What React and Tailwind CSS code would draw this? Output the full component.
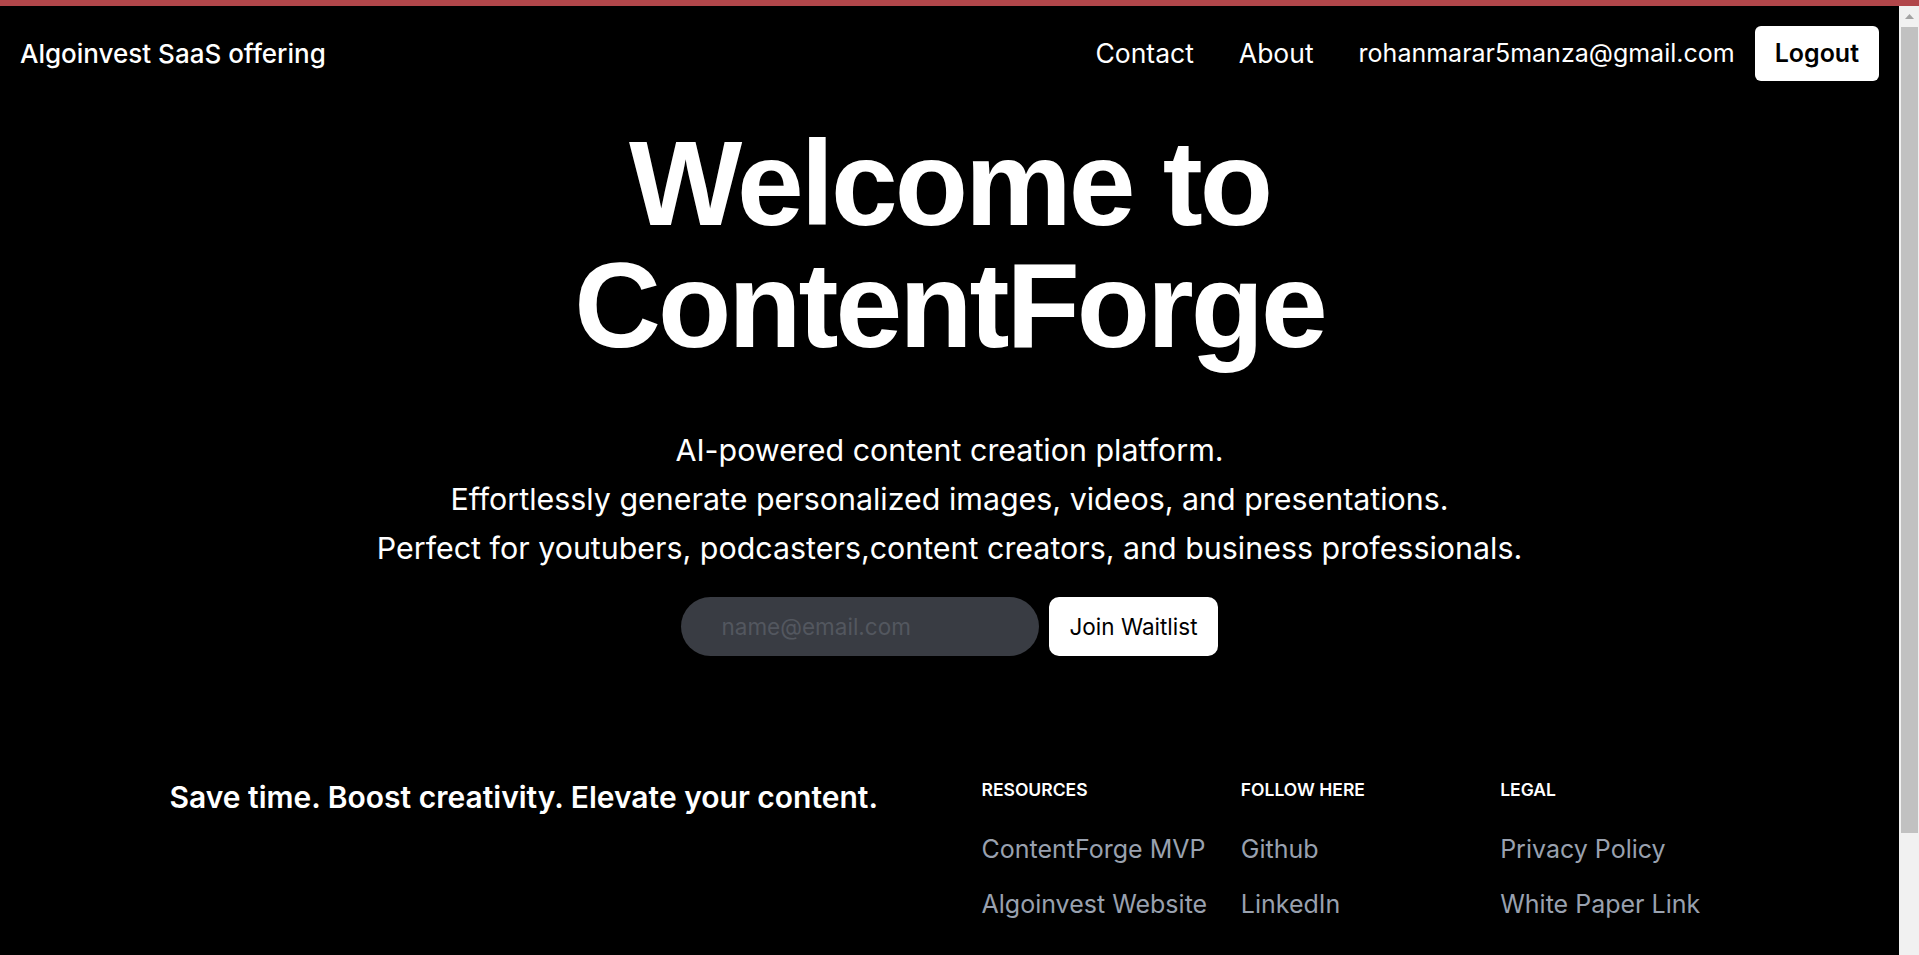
import React from "react";

const resources = ["ContentForge MVP", "Algoinvest Website"];
const follow = ["Github", "LinkedIn"];
const legal = ["Privacy Policy", "White Paper Link"];

function FooterColumn({ title, links }) {
  return (
    <div>
      <h2 className="mb-[30px] text-[17.5px] leading-[25px] font-semibold uppercase text-white">
        {title}
      </h2>
      <ul className="text-[25px] leading-[35px] text-[#99a1af]">
        {links.map((l) => (
          <li key={l} className="mb-[20px]">
            <a href="#" className="hover:underline">
              {l}
            </a>
          </li>
        ))}
      </ul>
    </div>
  );
}

// browser scrollbar as seen in the capture
function ScrollBar() {
  return (
    <div className="flex w-[20px] shrink-0 flex-col bg-[#f1f1f1]">
      <div className="flex h-[21px] items-center justify-center">
        <svg width="9" height="5" viewBox="0 0 9 5">
          <path d="M4.5 0L9 5H0z" fill="#a3a3a3" />
        </svg>
      </div>
      <div className="ml-[2px] mr-[1px] h-[806px] bg-[#c1c1c1]" />
    </div>
  );
}

export default function App() {
  return (
    <div className="h-screen flex flex-col bg-black font-['Inter','Noto_Sans',sans-serif] text-white">
      {/* window top strip */}
      <div className="h-[6px] shrink-0 bg-[#b1464a]" />

      <div className="flex flex-1 overflow-hidden">
        <main className="flex-1 min-w-0">
          {/* navbar */}
          <nav className="flex items-center justify-between px-5 py-5">
            <a href="#" className="text-[26px] leading-[35px] font-medium">
              Algoinvest SaaS offering
            </a>
            <div className="flex items-center">
              <ul className="flex items-center gap-[45px] text-[25px] leading-[35px]">
                <li>
                  <a href="#" className="text-[26.5px]">Contact</a>
                </li>
                <li>
                  <a href="#" className="text-[26.5px]">About</a>
                </li>
                <li>rohanmarar5manza@gmail.com</li>
              </ul>
              <button className="ml-5 rounded-[6px] bg-white px-5 py-[10px] text-[25px] leading-[35px] font-semibold text-black">
                Logout
              </button>
            </div>
          </nav>

          {/* hero */}
          <section className="flex flex-col items-center text-center">
            <h1 className="mt-[21px] font-['Liberation_Sans',Arial,sans-serif] text-[120px] leading-[122px] font-bold tracking-tight">
              Welcome to
              <br />
              ContentForge
            </h1>
            <p className="mt-[60px] text-[30.4px] leading-[48.75px]">
              AI-powered content creation platform.
              <br />
              Effortlessly generate personalized images, videos, and presentations.
              <br />
              Perfect for youtubers, podcasters,content creators, and business professionals.
            </p>
            <form className="mt-[25px] flex items-center gap-[10px]" onSubmit={(e) => e.preventDefault()}>
              <input
                type="email"
                placeholder="name@email.com"
                className="h-[59px] w-[358px] rounded-full bg-[#393c43] pl-10 pr-5 text-[22.5px] text-white outline-none placeholder:text-[#53575f]"
              />
              <button className="h-[59px] rounded-[10px] bg-white px-5 text-[22.5px] text-black">
                Join Waitlist
              </button>
            </form>
          </section>

          {/* footer */}
          <footer className="mx-auto mt-[121px] max-w-[1600px] px-5">
            <div className="flex justify-between">
              <p className="text-[30px] leading-[40px] font-semibold">
                Save time. Boost creativity. Elevate your content.
              </p>
              <div className="grid w-[748px] grid-cols-3 gap-[30px]">
                <FooterColumn title="Resources" links={resources} />
                <FooterColumn title="Follow here" links={follow} />
                <FooterColumn title="Legal" links={legal} />
              </div>
            </div>
          </footer>
        </main>

        <ScrollBar />
      </div>
    </div>
  );
}
